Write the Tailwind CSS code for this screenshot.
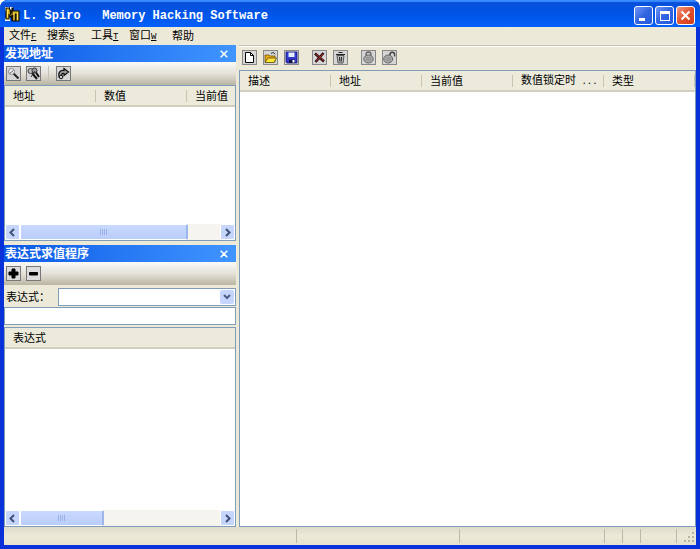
<!DOCTYPE html>
<html lang="zh-CN">
<head>
    <meta charset="UTF-8">
    <meta name="viewport" content="width=device-width, initial-scale=1.0">
    <title>L. Spiro Memory Hacking Software</title>
    <script src="https://cdn.jsdelivr.net/npm/@tailwindcss/browser@4"></script>
</head>
<body class="h-screen bg-white font-['Liberation_Sans','Noto_Sans_CJK_SC',sans-serif] text-[11px] leading-4 text-black">
    <div class="flex h-full flex-col overflow-hidden rounded-t-lg bg-[#0831d9]">

        <!-- Title bar -->
        <header class="flex h-[27px] shrink-0 items-center bg-linear-to-b from-[#0a4fd8] via-[#0054e6] to-[#0560fb] pr-[5px] pl-[5px] inset-shadow-[0_2px_1px_#3b8cff]">
            <svg class="mt-0.5 mr-[3px] size-[15px]" viewBox="0 0 15 15">
                <path d="M0 0h4v4H0zM5 0h3v3H5zM0 11h5v3H0z" fill="#fff"/>
                <path d="M1 1h3l3 5V1h1v3h6v10h-3V7h-1v7H7V8L6 10 4 8v4H1z" fill="#e0b91e" stroke="#171204" stroke-width="1.200"/>
                <path d="M2.500 3v7M9 5.500V13M12.500 5.500V13" stroke="#ffe65c"/>
                <path d="M5.500 3v5M7.500 8v6" stroke="#171204" stroke-width="1.500"/>
            </svg>
            <h1 class="flex-1 pt-1 font-['Liberation_Mono',monospace] text-xs font-bold whitespace-pre text-white">L. Spiro   Memory Hacking Software</h1>
            <div class="flex gap-0.5 pt-1">
                <button aria-label="最小化" class="size-[19px] rounded-[3px] border border-white bg-linear-to-br from-[#6d96f5] via-[#3265e0] to-[#245be0]">
                    <svg viewBox="0 0 17 17"><path d="M4 11h6v3H4z" fill="#fff"/></svg>
                </button>
                <button aria-label="最大化" class="size-[19px] rounded-[3px] border border-white bg-linear-to-br from-[#6d96f5] via-[#3265e0] to-[#245be0]">
                    <svg viewBox="0 0 17 17"><path d="M4 4h10v10H4zM5 7v6h8V7z" fill="#fff" fill-rule="evenodd"/></svg>
                </button>
                <button aria-label="关闭" class="size-[19px] rounded-[3px] border border-white bg-linear-to-br from-[#ef9a80] via-[#e2512c] to-[#cf3d16]">
                    <svg viewBox="0 0 17 17"><path d="M4.500 4.500l8 8M12.500 4.500l-8 8" stroke="#fff" stroke-width="2"/></svg>
                </button>
            </div>
        </header>

        <div class="mx-1 mb-1 flex min-h-0 flex-1 flex-col bg-[#ece9d8]">
            <!-- Menu -->
            <nav class="grid h-[18px] shrink-0 grid-cols-[38px_44px_38px_43px_auto] items-center justify-start pl-[5px]">
                <button class="text-left">文件<u class="font-['Liberation_Mono',monospace] text-[9px]">F</u></button>
                <button class="text-left">搜索<u class="font-['Liberation_Mono',monospace] text-[9px]">S</u></button>
                <button class="text-left">工具<u class="font-['Liberation_Mono',monospace] text-[9px]">T</u></button>
                <button class="text-left">窗口<u class="font-['Liberation_Mono',monospace] text-[9px]">W</u></button>
                <button class="text-left">帮助</button>
            </nav>

            <div class="flex min-h-0 flex-1 gap-[3px]">
                <!-- Docked panels -->
                <aside class="flex w-[232px] shrink-0 flex-col">
                    <section class="mb-1 flex h-[196px] shrink-0 flex-col">
                        <div class="flex h-[17px] shrink-0 items-center justify-between bg-linear-to-r from-[#0a58e6] to-[#4095ff] pr-2 pl-px text-white">
                            <h2 class="text-xs font-bold">发现地址</h2>
                            <button aria-label="关闭发现地址">
                                <svg class="size-2" viewBox="0 0 8 8"><path d="M.7.7l6.600 6.600M7.300.7L.7 7.300" stroke="#fff" stroke-width="1.500"/></svg>
                            </button>
                        </div>
                        <div class="flex h-[23px] shrink-0 items-center gap-[5px] bg-linear-to-b from-[#fbfaf8] via-[#e5e1d9] to-[#bab6a2] pl-0.5">
                            <button aria-label="搜索" class="size-[15px] border border-[#777] bg-[#d6d6d6]">
                                <svg viewBox="0 0 13 13"><path d="M6 6l5.500 5.500" stroke="#222" stroke-width="2"/><circle cx="4.500" cy="4.500" r="3" fill="#eee" stroke="#888"/><path d="M2.500 6.500l4-3" stroke="#666"/></svg>
                            </button>
                            <button aria-label="再次搜索" class="size-[15px] border border-[#777] bg-[#d6d6d6]">
                                <svg viewBox="0 0 13 13"><path d="M5 6l5 6M8 4l4 6" stroke="#111" stroke-width="2"/><circle cx="3.500" cy="4" r="2.500" fill="#bbb" stroke="#444"/><circle cx="7.500" cy="3.500" r="2.500" fill="#999" stroke="#333"/><path d="M4 10l4-6" stroke="#333"/></svg>
                            </button>
                            <span class="mx-0.5 h-[15px] w-px bg-[#c5c2b8]"></span>
                            <button aria-label="转到" class="size-[15px] border border-[#777] bg-[#d6d6d6]">
                                <svg viewBox="0 0 13 13"><path d="M2.500 11C.5 6 3 3 7 3.500V1.500L11.500 5 7 8.500V6.500C5 6 4 7.500 5 9.500" fill="#999" stroke="#111" stroke-width="1.200"/><circle cx="4" cy="10" r="1.800" fill="#ccc" stroke="#111"/></svg>
                            </button>
                        </div>
                        <div class="flex min-h-0 flex-1 flex-col border border-[#7f9db9] bg-white">
                            <div class="flex-1 overflow-hidden">
                                <table class="w-[273px] table-fixed">
                                    <thead class="bg-[#ebeadb]">
                                        <tr class="h-5 border-b-2 border-[#d3cfbf] text-left">
                                            <th class="bg-linear-to-r from-[#c7c5b2] to-[#c7c5b2] bg-[length:1px_12px] bg-right bg-no-repeat pl-2 font-normal">地址</th>
                                            <th class="bg-linear-to-r from-[#c7c5b2] to-[#c7c5b2] bg-[length:1px_12px] bg-right bg-no-repeat pl-2 font-normal">数值</th>
                                            <th class="pl-2 font-normal">当前值</th>
                                        </tr>
                                    </thead>
                                </table>
                            </div>
                            <div class="flex h-4 shrink-0 bg-[#f5f4ef]">
                                <button aria-label="向左滚动" class="w-[15px] rounded-xs border border-white bg-[#c5d5fc]">
                                    <svg class="size-[13px]" viewBox="0 0 13 13"><path d="M8 3L4.500 6.500 8 10" fill="none" stroke="#3f5378" stroke-width="2"/></svg>
                                </button>
                                <div class="flex flex-1">
                                    <div class="flex w-[84%] items-center justify-center rounded-xs border border-r-2 border-white border-r-[#9db5ea] bg-linear-to-b from-[#c9d9ff] to-[#bacdf9]">
                                        <svg class="h-1.5 w-2" viewBox="0 0 8 6"><path d="M.5 0v6M2.500 0v6M4.500 0v6M6.500 0v6" stroke="#99b2e8"/></svg>
                                    </div>
                                </div>
                                <button aria-label="向右滚动" class="w-[15px] rounded-xs border border-white bg-[#c5d5fc]">
                                    <svg class="size-[13px]" viewBox="0 0 13 13"><path d="M5 3l3.500 3.500L5 10" fill="none" stroke="#3f5378" stroke-width="2"/></svg>
                                </button>
                            </div>
                        </div>
                    </section>

                    <section class="flex min-h-0 flex-1 flex-col">
                        <div class="flex h-[17px] shrink-0 items-center justify-between bg-linear-to-r from-[#0a58e6] to-[#4095ff] pr-2 pl-px text-white">
                            <h2 class="text-xs font-bold">表达式求值程序</h2>
                            <button aria-label="关闭表达式求值程序">
                                <svg class="size-2" viewBox="0 0 8 8"><path d="M.7.7l6.600 6.600M7.300.7L.7 7.300" stroke="#fff" stroke-width="1.500"/></svg>
                            </button>
                        </div>
                        <div class="flex h-[23px] shrink-0 items-center gap-[5px] bg-linear-to-b from-[#fbfaf8] via-[#e5e1d9] to-[#bab6a2] pl-0.5">
                            <button aria-label="添加" class="size-[15px] border border-[#777] bg-[#dcdcdc]">
                                <svg viewBox="0 0 13 13"><path d="M5 2h3v3h3v3H8v3H5V8H2V5h3z" stroke="#000" stroke-linejoin="round"/></svg>
                            </button>
                            <button aria-label="删除" class="size-[15px] border border-[#777] bg-[#dcdcdc]">
                                <svg viewBox="0 0 13 13"><path d="M2.500 5.500h8v2.500h-8z" stroke="#000" stroke-linejoin="round"/></svg>
                            </button>
                        </div>
                        <div class="flex h-[22px] shrink-0 items-center pt-0.5 pl-0.5">
                            <label for="expression" class="w-[52px]">表达式：</label>
                            <div class="grid h-[18px] flex-1">
                                <select id="expression" class="col-start-1 row-start-1 w-full appearance-none border border-[#7f9db9] bg-white"></select>
                                <span class="pointer-events-none col-start-1 row-start-1 m-0.5 flex w-[14px] items-center justify-center self-stretch justify-self-end rounded-xs bg-[#c5d5fc]">
                                    <svg class="h-1.5 w-2" viewBox="0 0 8 6"><path d="M1 1l3 3 3-3" fill="none" stroke="#4d6185" stroke-width="2"/></svg>
                                </span>
                            </div>
                        </div>
                        <input type="text" aria-label="结果" class="mb-0.5 h-[18px] shrink-0 border border-[#7f9db9] bg-white px-1">
                        <div class="flex min-h-0 flex-1 flex-col border border-[#7f9db9] bg-white">
                            <div class="flex-1 overflow-hidden">
                                <table class="w-full table-fixed">
                                    <thead class="bg-[#ebeadb]">
                                        <tr class="h-5 border-b-2 border-[#d3cfbf] text-left">
                                            <th class="pl-2 font-normal">表达式</th>
                                        </tr>
                                    </thead>
                                </table>
                            </div>
                            <div class="flex h-4 shrink-0 bg-[#f5f4ef]">
                                <button aria-label="向左滚动" class="w-[15px] rounded-xs border border-white bg-[#c5d5fc]">
                                    <svg class="size-[13px]" viewBox="0 0 13 13"><path d="M8 3L4.500 6.500 8 10" fill="none" stroke="#3f5378" stroke-width="2"/></svg>
                                </button>
                                <div class="flex flex-1">
                                    <div class="flex w-[42%] items-center justify-center rounded-xs border border-r-2 border-white border-r-[#9db5ea] bg-linear-to-b from-[#c9d9ff] to-[#bacdf9]">
                                        <svg class="h-1.5 w-2" viewBox="0 0 8 6"><path d="M.5 0v6M2.500 0v6M4.500 0v6M6.500 0v6" stroke="#99b2e8"/></svg>
                                    </div>
                                </div>
                                <button aria-label="向右滚动" class="w-[15px] rounded-xs border border-white bg-[#c5d5fc]">
                                    <svg class="size-[13px]" viewBox="0 0 13 13"><path d="M5 3l3.500 3.500L5 10" fill="none" stroke="#3f5378" stroke-width="2"/></svg>
                                </button>
                            </div>
                        </div>
                    </section>
                </aside>

                <!-- Main list -->
                <main class="flex min-w-0 flex-1 flex-col border-t border-[#c5c2b8]">
                    <div class="flex h-6 shrink-0 items-center gap-1.5 border-t border-white pb-0.5 pl-[3px]">
                        <button aria-label="新建" class="size-[15px] border border-[#888] bg-[#d6d6d6]">
                            <svg viewBox="0 0 13 13"><path d="M2.500 1.500h5l3 3v7h-8z" fill="#fff" stroke="#000"/><path d="M7.500 1.500v3h3" fill="none" stroke="#000"/></svg>
                        </button>
                        <button aria-label="打开" class="size-[15px] border border-[#888] bg-[#d6d6d6]">
                            <svg viewBox="0 0 13 13"><path d="M1 4h4l1 1h5v6H1z" fill="#e8a818" stroke="#6b4a00" stroke-width=".7"/><path d="M1 11.500L4 7h8.500L10 11.500z" fill="#ffe63a" stroke="#4b3a00" stroke-width=".7"/><path d="M7 2.500c2-1.500 3-1 4 .8" fill="none" stroke="#222"/></svg>
                        </button>
                        <button aria-label="保存" class="mr-[7px] size-[15px] border border-[#888] bg-[#d6d6d6]">
                            <svg viewBox="0 0 13 13"><path d="M1 1h11v11H2l-1-1z" fill="#3439cf" stroke="#14147c" stroke-width=".8"/><path d="M3.500 1.500h6v4.500h-6z" fill="#e5f0ff"/><path d="M4 8.500h6V12H4z" fill="#151545"/><path d="M7.500 9h2v2.500h-2z" fill="#fff"/></svg>
                        </button>
                        <button aria-label="删除地址" class="size-[15px] border border-[#888] bg-[#d6d6d6]">
                            <svg viewBox="0 0 13 13"><path d="M2 2.500l9 8M10.500 2L2.500 11" stroke="#2b0d0d" stroke-width="2.600"/><path d="M3 3l7.500 6.700M10 3L3 10.300" stroke="#b33434" stroke-width="1"/></svg>
                        </button>
                        <button aria-label="清空" class="mr-[7px] size-[15px] border border-[#888] bg-[#d6d6d6]">
                            <svg viewBox="0 0 13 13"><path d="M3 4.500h7l-1 7.500H4z" fill="#bbb" stroke="#555"/><path d="M2 3.500h9M4.500 1.500h4M5.500 6l.3 4.500M7.500 6l-.3 4.500" fill="none" stroke="#222"/></svg>
                        </button>
                        <button aria-label="锁定" class="size-[15px] border border-[#888] bg-[#d6d6d6]">
                            <svg viewBox="0 0 13 13"><path d="M4 5V3.500a2.500 2.500 0 0 1 5 0V5" fill="#ccc" stroke="#666" stroke-width="1.300"/><ellipse cx="6.500" cy="8" rx="4.700" ry="4" fill="#aaa" stroke="#666"/><path d="M4 7h5M4 9h5" stroke="#888"/></svg>
                        </button>
                        <button aria-label="解锁" class="size-[15px] border border-[#888] bg-[#d6d6d6]">
                            <svg viewBox="0 0 13 13"><path d="M7 5V3.500a2.300 2.300 0 0 1 4.600 0V5.500" fill="none" stroke="#444" stroke-width="1.500"/><ellipse cx="5.200" cy="8" rx="4.500" ry="4" fill="#aaa" stroke="#666"/><path d="M3 7h5M3 9h5" stroke="#888"/></svg>
                        </button>
                    </div>
                    <div class="min-h-0 flex-1 overflow-hidden border border-[#7f9db9] bg-white">
                        <div class="bg-[#ebeadb]">
                            <table class="w-[455px] table-fixed">
                                <thead>
                                    <tr class="h-5 border-b-2 border-[#d3cfbf] text-left">
                                        <th class="bg-linear-to-r from-[#c7c5b2] to-[#c7c5b2] bg-[length:1px_12px] bg-right bg-no-repeat pl-2 font-normal">描述</th>
                                        <th class="bg-linear-to-r from-[#c7c5b2] to-[#c7c5b2] bg-[length:1px_12px] bg-right bg-no-repeat pl-2 font-normal">地址</th>
                                        <th class="bg-linear-to-r from-[#c7c5b2] to-[#c7c5b2] bg-[length:1px_12px] bg-right bg-no-repeat pl-2 font-normal">当前值</th>
                                        <th class="bg-linear-to-r from-[#c7c5b2] to-[#c7c5b2] bg-[length:1px_12px] bg-right bg-no-repeat pl-2 font-normal whitespace-nowrap">数值锁定时<span class="font-['Liberation_Mono',monospace] text-[9px]"> ...</span></th>
                                        <th class="bg-linear-to-r from-[#c7c5b2] to-[#c7c5b2] bg-[length:1px_12px] bg-right bg-no-repeat pl-2 font-normal">类型</th>
                                    </tr>
                                </thead>
                            </table>
                        </div>
                    </div>
                </main>
            </div>

            <!-- Status bar -->
            <footer class="flex h-[18px] shrink-0 items-stretch bg-linear-to-b from-[#dedbcb] via-[#ece9d8] to-[#e6e2d0] py-0.5">
                <span class="flex-1 border-r border-[#bdb9a8]"></span>
                <span class="w-[163px] border-r border-[#bdb9a8]"></span>
                <span class="w-[145px] border-r border-[#bdb9a8]"></span>
                <span class="w-[18px] border-r border-[#bdb9a8]"></span>
                <span class="w-[18px] border-r border-[#bdb9a8]"></span>
                <span class="w-9 border-r border-[#bdb9a8]"></span>
                <span class="flex w-[19px] items-end justify-end">
                    <svg class="size-3" viewBox="0 0 12 12"><path d="M8 1h2v2H8zM4 5h2v2H4zM8 5h2v2H8zM0 9h2v2H0zM4 9h2v2H4zM8 9h2v2H8z" fill="#b8b4a2"/></svg>
                </span>
            </footer>
        </div>
    </div>
</body>
</html>
